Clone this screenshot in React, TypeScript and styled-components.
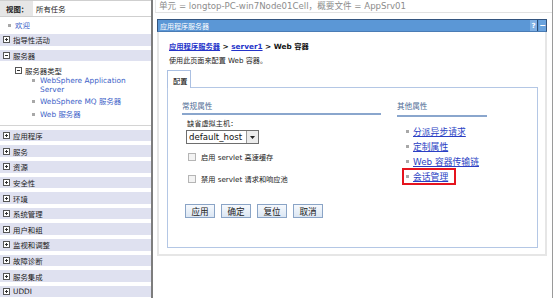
import React from "react";
import styled, { createGlobalStyle } from "styled-components";

const GlobalStyle = createGlobalStyle`
  body {
    margin: 0;
    background: #fff;
    font-family: "DejaVu Sans", "Noto Sans CJK SC", sans-serif;
  }
`;

const collapsedGroups = [
  "应用程序",
  "服务",
  "资源",
  "安全性",
  "环境",
  "系统管理",
  "用户和组",
  "监视和调整",
  "故障诊断",
  "服务集成",
  "UDDI",
];

const serverTypes = [
  ["WebSphere Application", "Server"],
  ["WebSphere MQ 服务器"],
  ["Web 服务器"],
];

const otherProps = ["分派异步请求", "定制属性", "Web 容器传输链", "会话管理"];

const ToggleIcon: React.FC<{ open?: boolean }> = ({ open }) => (
  <svg width="7" height="7" viewBox="0 0 7 7">
    <rect x="0.5" y="0.5" width="6" height="6" fill="#fff" stroke="#555" />
    <path d="M2 3.5h3" stroke="#333" />
    {!open && <path d="M3.5 2v3" stroke="#333" />}
  </svg>
);

const App: React.FC = () => {
  return (
    <Page>
      <GlobalStyle />
      <Nav>
        <ViewBar>
          <ViewLabel>视图：</ViewLabel>
          <ViewSelect>所有任务</ViewSelect>
        </ViewBar>
        <WelcomeRow>
          <Bullet />
          <NavLink>欢迎</NavLink>
        </WelcomeRow>
        <GroupBar $first>
          <ToggleIcon />
          指导性活动
        </GroupBar>
        <GroupBar>
          <ToggleIcon open />
          服务器
        </GroupBar>
        <GroupBody>
          <SubGroup>
            <ToggleIcon open />
            服务器类型
          </SubGroup>
          <SubList>
            {serverTypes.map((lines) => (
              <SubItem key={lines[0]}>
                <Bullet />
                <NavLink>
                  {lines.map((l) => (
                    <div key={l}>{l}</div>
                  ))}
                </NavLink>
              </SubItem>
            ))}
          </SubList>
        </GroupBody>
        {collapsedGroups.map((g) => (
          <GroupBar key={g}>
            <ToggleIcon />
            {g}
          </GroupBar>
        ))}
      </Nav>

      <Main>
        <InfoBar>单元 = longtop-PC-win7Node01Cell，概要文件 = AppSrv01</InfoBar>
        <Panel>
          <PanelHeader>
            <span>应用程序服务器</span>
            <HeaderTools>
              <HelpIcon>?</HelpIcon>
              <MinIcon>−</MinIcon>
            </HeaderTools>
          </PanelHeader>
          <PanelBody>
            <Breadcrumb>
              <a>应用程序服务器</a> &gt; <a>server1</a> &gt; Web 容器
            </Breadcrumb>
            <Description>使用此页面来配置 Web 容器。</Description>
            <Tabs>
              <Tab>配置</Tab>
            </Tabs>
            <TabContent>
              <LeftColumn>
                <SectionTitle>常规属性</SectionTitle>
                <FieldLabel>缺省虚拟主机：</FieldLabel>
                <Select>
                  <span>default_host</span>
                  <SelectArrow>
                    <svg width="5" height="3" viewBox="0 0 5 3">
                      <path d="M0 0h5L2.5 3z" fill="#222" />
                    </svg>
                  </SelectArrow>
                </Select>
                <CheckRow $first>
                  <CheckBox />
                  启用 servlet 高速缓存
                </CheckRow>
                <CheckRow>
                  <CheckBox />
                  禁用 servlet 请求和响应池
                </CheckRow>
                <ButtonRow>
                  <Button>应用</Button>
                  <Button>确定</Button>
                  <Button>复位</Button>
                  <Button>取消</Button>
                </ButtonRow>
              </LeftColumn>
              <RightColumn>
                <SectionTitle $lower>其他属性</SectionTitle>
                <PropList>
                  {otherProps.map((p) => (
                    <PropItem key={p} $highlight={p === "会话管理"}>
                      <Bullet />
                      <PropLink>{p}</PropLink>
                    </PropItem>
                  ))}
                </PropList>
              </RightColumn>
            </TabContent>
          </PanelBody>
        </Panel>
      </Main>
    </Page>
  );
};

export default App;

const Page = styled.div`
  display: flex;
  width: 553px;
  height: 298px;
  overflow: hidden;
  background: #fff;
`;

const Nav = styled.div`
  width: 151px;
  flex-shrink: 0;
  border-right: 2px solid #7d7d7d;
  display: flex;
  flex-direction: column;
  font-size: 7.4px;
  color: #222;
`;

const ViewBar = styled.div`
  display: flex;
  height: 17px;
  background: #e6e6e6;
  border-top: 1px solid #cfcfcf;
  border-bottom: 1px solid #cfcfcf;
  box-sizing: border-box;
`;

const ViewLabel = styled.div`
  width: 33px;
  padding-left: 6px;
  box-sizing: border-box;
  font-weight: bold;
  display: flex;
  align-items: center;
`;

const ViewSelect = styled.div`
  flex: 1;
  background: #fff;
  display: flex;
  align-items: center;
  padding-left: 3px;
`;

const Bullet = styled.span`
  width: 3px;
  height: 3px;
  background: #a8a8a8;
  flex-shrink: 0;
`;

const NavLink = styled.span`
  color: #3c5fc8;
  line-height: 9px;
`;

const WelcomeRow = styled.div`
  display: flex;
  align-items: center;
  gap: 4px;
  height: 14px;
  padding-left: 8px;
  margin-top: 1px;
`;

const GroupBar = styled.div<{ $first?: boolean }>`
  display: flex;
  align-items: center;
  gap: 3px;
  height: 11.6px;
  padding-left: 3px;
  background: #dfe1f0;
  margin-top: ${(p) => (p.$first ? "2px" : "4px")};
`;

const GroupBody = styled.div`
  padding: 4px 0 6px 15px;
  border-bottom: 1px solid #d4d4d4;
`;

const SubGroup = styled.div`
  display: flex;
  align-items: center;
  gap: 3px;
  height: 10px;
`;

const SubList = styled.div`
  display: flex;
  flex-direction: column;
  gap: 3.6px;
  padding-left: 17px;
  margin-top: 0.5px;
`;

const SubItem = styled.div`
  display: flex;
  align-items: flex-start;
  gap: 5px;
  ${Bullet} {
    margin-top: 3px;
  }
`;

const Main = styled.div`
  flex: 1;
  display: flex;
  flex-direction: column;
  border-right: 1px solid #9a9a9a;
  min-width: 0;
`;

const InfoBar = styled.div`
  height: 12px;
  line-height: 13px;
  padding-left: 3px;
  margin-left: 2px;
  font-size: 8.6px;
  color: #8c8c8c;
  border-bottom: 1px solid #e2e2e2;
  border-left: 1px solid #e8e8e8;
  white-space: nowrap;
`;

const Panel = styled.div`
  margin: 6px 5px 0 4px;
  border: 2px solid #e6e6e6;
  border-top: none;
`;

const PanelHeader = styled.div`
  height: 13px;
  box-sizing: border-box;
  background: #5b97d6;
  border: 1px solid #34557f;
  border-bottom-color: #4a7cb5;
  margin: 0 -2px;
  color: #fff;
  font-size: 7px;
  display: flex;
  align-items: center;
  justify-content: space-between;
  padding-left: 2px;
`;

const HeaderTools = styled.div`
  display: flex;
  align-self: stretch;
`;

const HelpIcon = styled.span`
  width: 7px;
  background: #7fb0e4;
  color: #fff;
  font-size: 7px;
  font-weight: bold;
  display: flex;
  align-items: center;
  justify-content: center;
  margin-right: 1px;
  border-right: 1px solid #2c4a70;
`;

const MinIcon = styled.span`
  width: 7px;
  background: #6aa3de;
  color: #fff;
  font-size: 8px;
  font-weight: bold;
  display: flex;
  align-items: center;
  justify-content: center;
`;

const PanelBody = styled.div`
  padding: 10px 7px 6px 8px;
`;

const Breadcrumb = styled.div`
  font-size: 7.3px;
  font-weight: bold;
  line-height: 10px;
  padding-left: 2px;
  color: #111;
  a {
    color: #2433c9;
    text-decoration: underline;
  }
`;

const Description = styled.div`
  font-size: 7.1px;
  line-height: 10px;
  margin-top: 4px;
  padding-left: 2px;
  color: #222;
`;

const Tabs = styled.div`
  display: flex;
  margin-top: 4px;
`;

const Tab = styled.div`
  width: 24px;
  height: 18px;
  box-sizing: border-box;
  border: 1px solid #abc0e2;
  border-bottom: none;
  background: #fff;
  font-size: 7.2px;
  padding: 5px 0 0 5px;
  margin-bottom: -1px;
  position: relative;
  z-index: 1;
`;

const TabContent = styled.div`
  height: 161px;
  box-sizing: border-box;
  border: 1px solid #b4c7e5;
  padding: 14px 0 0 14px;
  display: flex;
  gap: 16px;
`;

const LeftColumn = styled.div`
  width: 199px;
  display: flex;
  flex-direction: column;
  align-items: flex-start;
`;

const RightColumn = styled.div`
  width: 90px;
`;

const SectionTitle = styled.div<{ $lower?: boolean }>`
  align-self: stretch;
  font-size: 7.6px;
  line-height: 10px;
  color: #4d6b94;
  padding-bottom: ${(p) => (p.$lower ? "3px" : "1px")};
  border-bottom: 2px solid #8aa6cd;
`;

const FieldLabel = styled.div`
  font-size: 7.2px;
  line-height: 10px;
  margin-top: 4px;
  padding-left: 5px;
  color: #222;
`;

const Select = styled.div`
  margin: 1px 0 0 4px;
  width: 73px;
  height: 14px;
  box-sizing: border-box;
  border: 1px solid #6e6e6e;
  display: flex;
  align-items: center;
  justify-content: space-between;
  font-size: 8.6px;
  color: #111;
  padding-left: 2px;
`;

const SelectArrow = styled.span`
  width: 11px;
  align-self: stretch;
  border-left: 1px solid #9a9a9a;
  background: #ececec;
  display: flex;
  align-items: center;
  justify-content: center;
`;

const CheckRow = styled.div<{ $first?: boolean }>`
  display: flex;
  align-items: center;
  gap: 5px;
  height: 10px;
  margin-top: ${(p) => (p.$first ? "8px" : "12px")};
  padding-left: 6px;
  font-size: 7.2px;
  color: #222;
`;

const CheckBox = styled.span`
  width: 8px;
  height: 8px;
  box-sizing: border-box;
  border: 1px solid #b5b5b5;
  background: #f3f3f3;
`;

const ButtonRow = styled.div`
  display: flex;
  gap: 6px;
  margin: 20px 0 0 3px;
`;

const Button = styled.button`
  width: 30px;
  height: 14px;
  padding: 0;
  box-sizing: border-box;
  border: 1px solid #8aa4c6;
  background: linear-gradient(#f6f9fd, #dbe6f3);
  font-family: inherit;
  font-size: 8.6px;
  color: #222;
  display: flex;
  align-items: center;
  justify-content: center;
`;

const PropList = styled.div`
  display: flex;
  flex-direction: column;
  gap: 2px;
  margin-top: 8px;
`;

const PropItem = styled.div<{ $highlight?: boolean }>`
  display: flex;
  align-items: center;
  gap: 4px;
  height: 13px;
  width: fit-content;
  margin-left: 7px;
  padding: 0 6px 0 2px;
  outline: ${(p) => (p.$highlight ? "2px solid #e5141e" : "none")};
`;

const PropLink = styled.span`
  font-size: 8.8px;
  color: #2b3fc4;
  text-decoration: underline;
`;
